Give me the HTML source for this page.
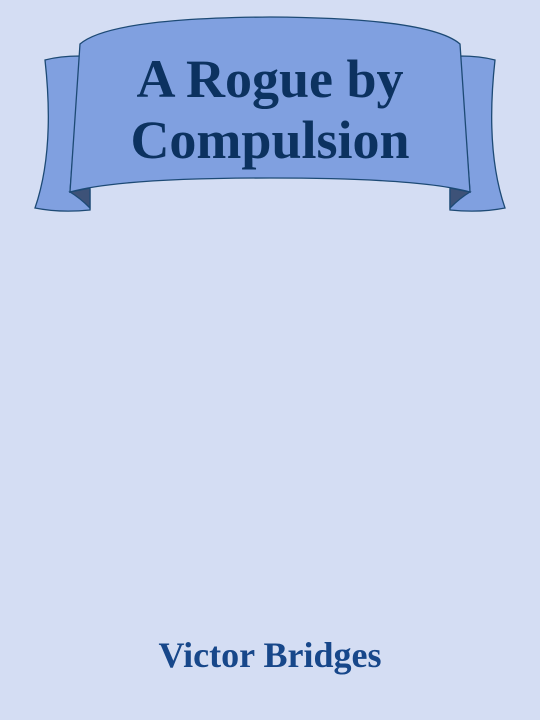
<!DOCTYPE html>
<html><head><style>
html,body{margin:0;padding:0;}
body{width:540px;height:720px;background:#d4ddf3;position:relative;overflow:hidden;font-family:"Liberation Serif",serif;}
svg{position:absolute;left:0;top:0;}
.t{position:absolute;left:0;width:540px;text-align:center;font-weight:bold;color:#0c3260;font-size:54px;line-height:60px;}
.a{position:absolute;left:0;width:540px;text-align:center;font-weight:bold;color:#17478a;font-size:36px;top:634px;}
</style></head><body>
<svg width="540" height="720" viewBox="0 0 540 720">
<g stroke="#1d4a75" stroke-width="1.3" fill="#80a0e0">
<path d="M45,60 Q60,56 80,56 L70,192 L90,190 L90,210 Q60,213 35,208 Q55,150 45,60 Z"/>
<path d="M495,60 Q480,56 460,56 L470,192 L450,190 L450,210 Q480,213 505,208 Q485,150 495,60 Z"/>
<path d="M70,192 L90,188 L90,208 Q80,198 70,192 Z" fill="#3d5278"/>
<path d="M470,192 L450,188 L450,208 Q460,198 470,192 Z" fill="#3d5278"/>
<path d="M80,44 Q110,18 270,17 Q430,18 460,44 L470,192 Q420,178 270,178 Q120,178 70,192 Z"/>
</g>
</svg>
<div class="t" style="top:49px">A Rogue by</div>
<div class="t" style="top:110px">Compulsion</div>
<div class="a">Victor Bridges</div>
</body></html>
